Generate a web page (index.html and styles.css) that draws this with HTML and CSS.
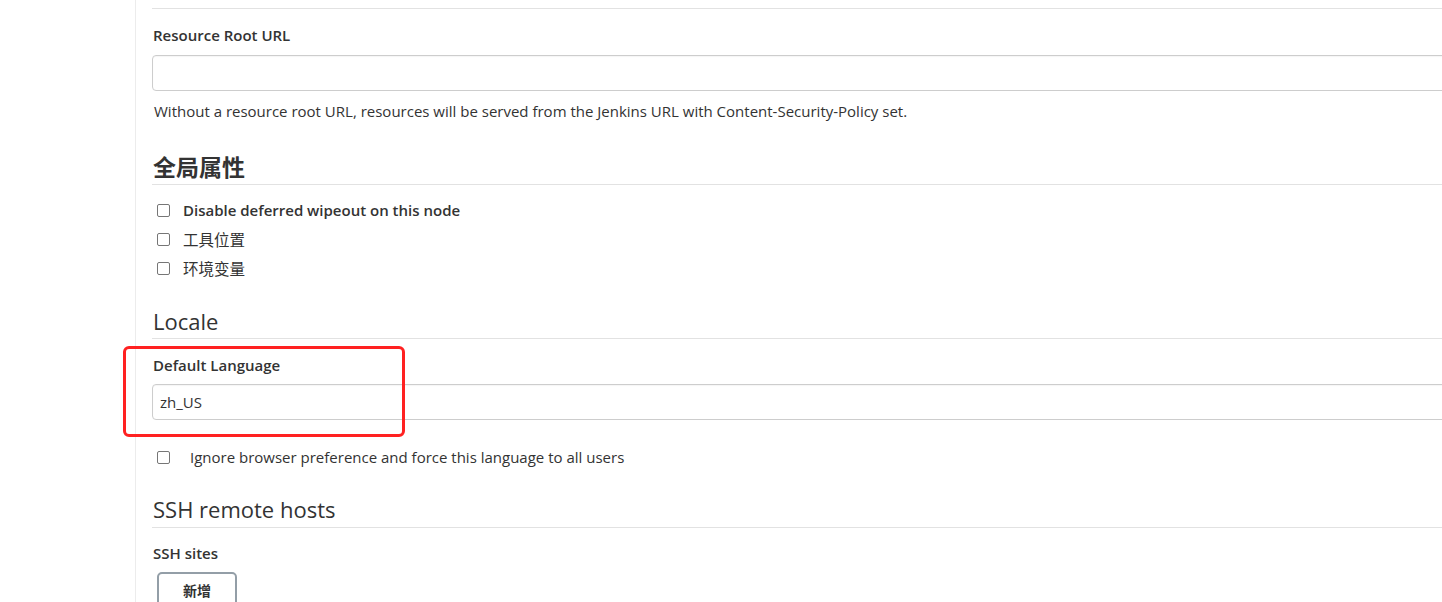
FILE: index.html
```html
<!DOCTYPE html>
<html lang="zh">
<head>
<meta charset="utf-8">
<title>Configure System</title>
<link rel="stylesheet" href="styles.css">
</head>
<body>
<div class="page">
  <aside class="side"></aside>
  <main class="main">
    <div class="divider top-divider"></div>

    <div class="field first-field">
      <div class="label">Resource Root URL</div>
      <input class="text-input" type="text" value="">
      <div class="help">Without a resource root URL, resources will be served from the Jenkins URL with Content-Security-Policy set.</div>
    </div>

    <h2 class="section-title cjk">全局属性</h2>
    <div class="checks">
      <label class="check-row"><span class="box"></span><span class="check-label strong">Disable deferred wipeout on this node</span></label>
      <label class="check-row"><span class="box"></span><span class="check-label cjk-label">工具位置</span></label>
      <label class="check-row"><span class="box"></span><span class="check-label cjk-label">环境变量</span></label>
    </div>

    <h2 class="section-title locale-title">Locale</h2>
    <div class="field highlight-wrap">
      <div class="highlight"></div>
      <div class="label">Default Language</div>
      <input class="text-input lang-input" type="text" value="zh_US">
    </div>
    <label class="check-row ignore-row"><span class="box"></span><span class="check-label wide">Ignore browser preference and force this language to all users</span></label>

    <h2 class="section-title ssh-title">SSH remote hosts</h2>
    <div class="label ssh-label">SSH sites</div>
    <button class="add-btn" type="button">新增</button>
  </main>
</div>
</body>
</html>
```
FILE: styles.css
```css
html, body {
  margin: 0;
  padding: 0;
  background: #fff;
  overflow: hidden;
}
body {
  font-family: "Open Sans", "Noto Sans CJK SC", sans-serif;
  color: #333;
  width: 1442px;
  height: 602px;
}
.page {
  display: flex;
  height: 602px;
}
.side {
  flex: 0 0 135px;
  border-right: 1px solid #ececec;
}
.main {
  flex: 0 0 1500px;
  padding-left: 16px;
  position: relative;
}
.divider {
  height: 1px;
  background: #e2e2e2;
}
.top-divider {
  margin-top: 8px;
}
.field {
  display: flex;
  flex-direction: column;
}
.first-field {
  margin-top: 16px;
}
.label {
  font-size: 15px;
  font-weight: 600;
  line-height: 20px;
  color: #333;
  padding-left: 1px;
}
.text-input {
  margin-top: 10px;
  height: 36px;
  box-sizing: border-box;
  border: 1px solid #cdcdcd;
  border-radius: 4px;
  font-family: "Open Sans", sans-serif;
  font-size: 15px;
  color: #333;
  padding: 0 7px;
  outline: none;
  box-shadow: inset 0 1px 1px rgba(0,0,0,0.04);
}
.lang-input {
  margin-top: 9px;
}
.help {
  margin-top: 10px;
  font-size: 15px;
  line-height: 20px;
  color: #333;
  padding-left: 2px;
}
.section-title {
  margin: 0;
  font-size: 22px;
  font-weight: 400;
  line-height: 30px;
  color: #333;
  border-bottom: 1px solid #e2e2e2;
  padding-left: 1px;
  padding-bottom: 2px;
}
.section-title.cjk {
  margin-top: 30px;
  font-size: 23px;
  font-weight: 700;
  font-family: "Noto Sans CJK SC", sans-serif;
  padding-bottom: 3px;
}
.checks {
  display: flex;
  flex-direction: column;
  margin-top: 15px;
  gap: 9px;
}
.check-row {
  display: flex;
  align-items: center;
  height: 20px;
}
.box {
  width: 11px;
  height: 11px;
  border: 1px solid #767676;
  border-radius: 2px;
  margin-left: 5px;
  flex: 0 0 auto;
}
.check-label {
  font-size: 15px;
  margin-left: 13px;
  line-height: 20px;
  color: #333;
}
.check-label.strong {
  font-weight: 600;
}
.cjk-label {
  font-family: "Noto Sans CJK SC", sans-serif;
  font-size: 15.5px;
}
.locale-title {
  margin-top: 28px;
}
.highlight-wrap {
  position: relative;
  margin-top: 16px;
}
.highlight {
  position: absolute;
  left: -29px;
  top: -9px;
  width: 276px;
  height: 85px;
  border: 3px solid #ff2121;
  border-radius: 6px;
}
.ignore-row {
  margin-top: 27px;
}
.check-label.wide {
  margin-left: 20px;
}
.ssh-title {
  margin-top: 27px;
  padding-bottom: 3px;
}
.ssh-label {
  margin-top: 15px;
}
.add-btn {
  margin-top: 9px;
  margin-left: 5px;
  width: 80px;
  height: 36px;
  border: 2px solid #939ea7;
  border-radius: 5px;
  background: #fff;
  font-family: "Noto Sans CJK SC", sans-serif;
  font-size: 14px;
  font-weight: 700;
  color: #333;
  padding: 0;
}
```
